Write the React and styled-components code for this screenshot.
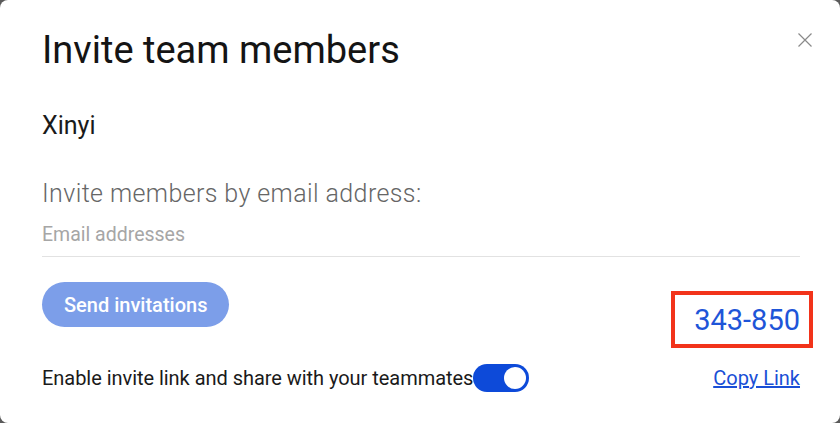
import React from "react";
import styled, { createGlobalStyle } from "styled-components";

const Global = createGlobalStyle`
  html, body { margin: 0; padding: 0; background: #5a5a5a; }
  body { font-family: Roboto, "Liberation Sans", sans-serif; }
  * { box-sizing: border-box; }
`;

const Dialog = styled.div`
  position: relative;
  width: 840px;
  height: 423px;
  background: #fff;
  border-radius: 8px;
  padding: 28px 40px 0 42px;
  display: flex;
  flex-direction: column;
`;

const Title = styled.h1`
  margin: 0;
  font-size: 38px;
  font-weight: 400;
  line-height: 44px;
  color: #141414;
`;

const Close = styled.button`
  position: absolute;
  top: 33px;
  right: 28px;
  width: 14px;
  height: 14px;
  padding: 0;
  border: 0;
  background: none;
  cursor: pointer;
  display: flex;
`;

const Name = styled.div`
  margin-top: 39px;
  font-size: 25px;
  line-height: 30px;
  color: #1a1a1a;
`;

const Label = styled.div`
  margin-top: 38px;
  font-size: 25px;
  font-weight: 300;
  line-height: 30px;
  letter-spacing: 0.4px;
  color: #666;
`;

const Input = styled.input`
  margin-top: 13px;
  width: 100%;
  border: 0;
  border-bottom: 1px solid #e2e2e2;
  padding: 0 0 10px 0;
  font-family: inherit;
  font-size: 19.5px;
  line-height: 24px;
  height: 35px;
  color: #333;
  outline: none;
  &::placeholder { color: #a6a6a6; }
`;

const ActionRow = styled.div`
  margin-top: 25px;
  display: flex;
  align-items: flex-start;
  justify-content: space-between;
`;

const SendButton = styled.button`
  height: 45px;
  padding: 0 22px;
  border: 0;
  border-radius: 23px;
  background: #7c9ee9;
  color: #fff;
  font-family: inherit;
  font-size: 20px;
  font-weight: 500;
  cursor: pointer;
`;

const Code = styled.div`
  margin-top: 9px;
  margin-right: -13px;
  width: 142px;
  height: 57px;
  border: 4px solid #f2331a;
  display: flex;
  align-items: center;
  justify-content: flex-end;
  padding-right: 9px;
  font-size: 29px;
  color: #1e55d8;
`;

const BottomRow = styled.div`
  margin-top: 16px;
  display: flex;
  align-items: center;
  justify-content: space-between;
`;

const ToggleLabel = styled.label`
  display: flex;
  align-items: center;
  font-size: 20px;
  letter-spacing: -0.04px;
  color: #1a1a1a;
`;

const Switch = styled.span`
  display: inline-flex;
  align-items: center;
  justify-content: ${(p) => (p.$on ? "flex-end" : "flex-start")};
  width: 56px;
  height: 28px;
  border-radius: 14px;
  background: ${(p) => (p.$on ? "#0d4ad9" : "#ccc")};
  padding: 3px;
`;

const Knob = styled.span`
  width: 22px;
  height: 22px;
  border-radius: 50%;
  background: #fff;
`;

const CopyLink = styled.a`
  font-size: 20px;
  color: #1a4fd6;
  text-decoration: underline;
  cursor: pointer;
`;

export default function App() {
  return (
    <>
      <Global />
      <Dialog>
        <Title>Invite team members</Title>
        <Close aria-label="Close">
          <svg width="14" height="14" viewBox="0 0 14 14">
            <path d="M0.5 0.5 L13.5 13.5 M13.5 0.5 L0.5 13.5" stroke="#8a8a8a" strokeWidth="1.2" fill="none" />
          </svg>
        </Close>
        <Name>Xinyi</Name>
        <Label>Invite members by email address:</Label>
        <Input placeholder="Email addresses" />
        <ActionRow>
          <SendButton>Send invitations</SendButton>
          <Code>343-850</Code>
        </ActionRow>
        <BottomRow>
          <ToggleLabel>
            Enable invite link and share with your teammates
            <Switch $on>
              <Knob />
            </Switch>
          </ToggleLabel>
          <CopyLink>Copy Link</CopyLink>
        </BottomRow>
      </Dialog>
    </>
  );
}
